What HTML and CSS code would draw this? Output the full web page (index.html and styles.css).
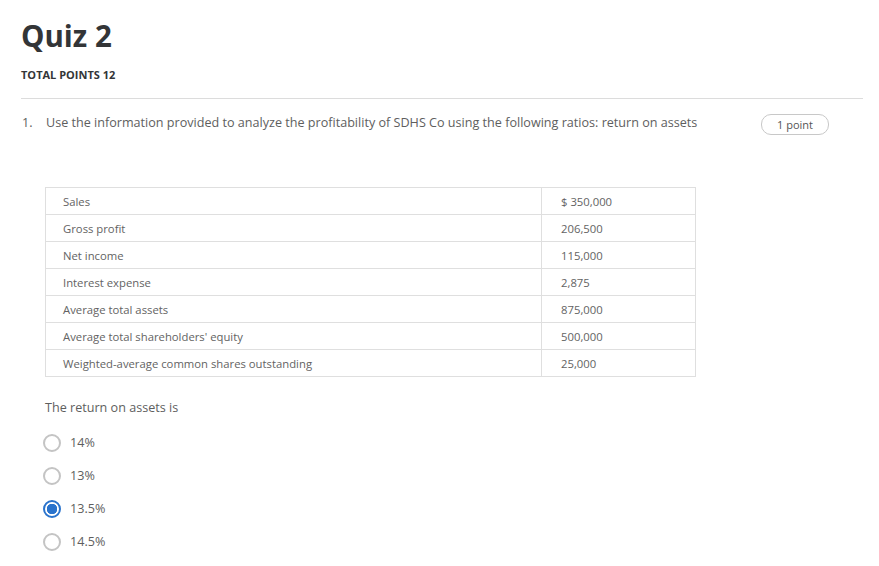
FILE: index.html
```html
<!DOCTYPE html>
<html>
<head>
<meta charset="utf-8">
<link rel="stylesheet" href="styles.css">
</head>
<body>
<div class="page">
  <header class="quiz-head">
    <h1 class="title">Quiz 2</h1>
    <div class="total">TOTAL POINTS 12</div>
  </header>
  <section class="question">
    <div class="q-row">
      <span class="q-num">1.</span>
      <p class="q-text">Use the information provided to analyze the profitability of SDHS Co using the following ratios: return on assets</p>
      <span class="pill">1 point</span>
    </div>
    <div class="q-body">
      <table class="data">
        <tr><td class="lbl">Sales</td><td class="val">$ 350,000</td></tr>
        <tr><td class="lbl">Gross profit</td><td class="val">206,500</td></tr>
        <tr><td class="lbl">Net income</td><td class="val">115,000</td></tr>
        <tr><td class="lbl">Interest expense</td><td class="val">2,875</td></tr>
        <tr><td class="lbl">Average total assets</td><td class="val">875,000</td></tr>
        <tr><td class="lbl">Average total shareholders' equity</td><td class="val">500,000</td></tr>
        <tr><td class="lbl">Weighted-average common shares outstanding</td><td class="val">25,000</td></tr>
      </table>
      <p class="prompt">The return on assets is</p>
      <ul class="options">
        <li class="opt"><span class="radio"></span><span class="opt-text">14%</span></li>
        <li class="opt"><span class="radio"></span><span class="opt-text">13%</span></li>
        <li class="opt"><span class="radio checked"></span><span class="opt-text">13.5%</span></li>
        <li class="opt"><span class="radio"></span><span class="opt-text">14.5%</span></li>
      </ul>
    </div>
  </section>
</div>
</body>
</html>
```

FILE: styles.css
```css
html, body {
  margin: 0;
  padding: 0;
  background: #ffffff;
}
body {
  font-family: "Open Sans", "Noto Sans", sans-serif;
  color: #373a3c;
}
.page {
  padding: 18px 16px 0 21px;
}
.quiz-head {
  border-bottom: 1px solid #dcdcdc;
  padding-bottom: 16px;
}
.title {
  margin: 0;
  font-size: 29.5px;
  line-height: 36px;
  font-weight: 700;
  color: #333537;
}
.total {
  margin-top: 13px;
  font-size: 11px;
  line-height: 15px;
  font-weight: 700;
  color: #333537;
}
.question {
  padding-top: 15px;
}
.q-row {
  display: flex;
  align-items: flex-start;
}
.q-num {
  width: 24px;
  flex: none;
  font-size: 12.6px;
  line-height: 18px;
  color: #5e5e5e;
  padding-left: 1px;
}
.q-text {
  margin: 0;
  flex: 1;
  font-size: 12.6px;
  line-height: 18px;
  color: #5e5e5e;
}
.pill {
  flex: none;
  margin: 0 34px 0 20px;
  width: 66px;
  height: 19px;
  border: 1px solid #c8c8c8;
  border-radius: 10px;
  font-size: 11px;
  line-height: 19px;
  text-align: center;
  color: #555;
}
.q-body {
  padding-left: 24px;
}
.data {
  margin-top: 52px;
  border-collapse: collapse;
  width: 651px;
}
.data td {
  border: 1px solid #dfdfdf;
  height: 26px;
  padding: 0 0 0 17px;
  font-size: 11.3px;
  color: #636363;
}
.data .lbl {
  width: 478px;
}
.data .val {
  padding-left: 19px;
}
.prompt {
  margin: 22px 0 0 0;
  font-size: 12.6px;
  line-height: 18px;
  color: #5e5e5e;
}
.options {
  list-style: none;
  margin: 9px 0 0 -2px;
  padding: 0;
}
.opt {
  display: flex;
  align-items: center;
  height: 33px;
}
.radio {
  box-sizing: border-box;
  width: 18px;
  height: 18px;
  border: 2px solid #c4c4c4;
  border-radius: 50%;
  margin-right: 9px;
  flex: none;
}
.radio.checked {
  border-color: #2a73cc;
  background: radial-gradient(circle, #2a73cc 0 5px, #ffffff 5.5px);
}
.opt-text {
  font-size: 12.6px;
  color: #5e5e5e;
}
```
